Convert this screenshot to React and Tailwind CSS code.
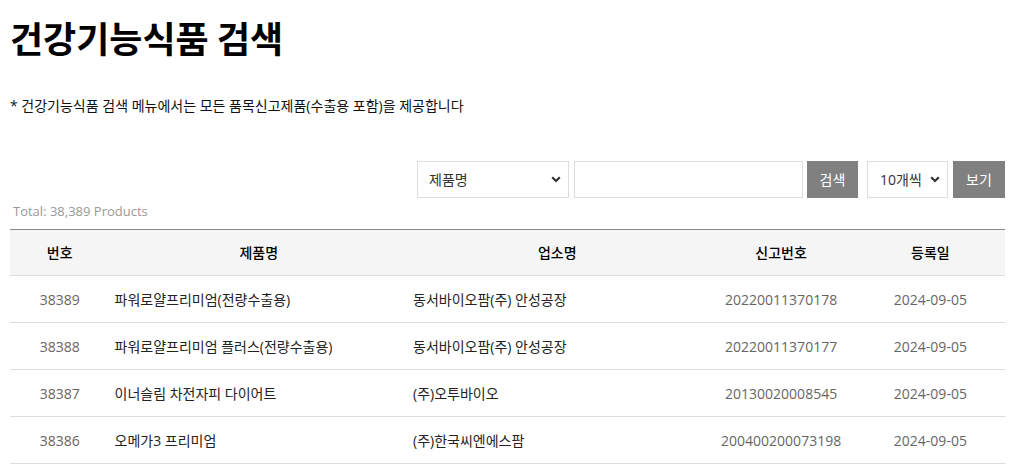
import React from "react";

const rows = [
  ["38389", "파워로얄프리미엄(전량수출용)", "동서바이오팜(주) 안성공장", "20220011370178", "2024-09-05"],
  ["38388", "파워로얄프리미엄 플러스(전량수출용)", "동서바이오팜(주) 안성공장", "20220011370177", "2024-09-05"],
  ["38387", "이너슬림 차전자피 다이어트", "(주)오투바이오", "20130020008545", "2024-09-05"],
  ["38386", "오메가3 프리미엄", "(주)한국씨엔에스팜", "200400200073198", "2024-09-05"],
];

const font = { fontFamily: '"Open Sans", "Noto Sans CJK KR", sans-serif' };

function Chevron() {
  return (
    <svg width="10" height="7" viewBox="0 0 10 7" className="pointer-events-none">
      <path d="M1.2 1.3 L5 5 L8.8 1.3" fill="none" stroke="#333" strokeWidth="2.2" />
    </svg>
  );
}

export default function App() {
  return (
    <div className="w-[1013px] h-[466px] bg-white overflow-hidden text-black" style={font}>
      <div className="ml-[10px] w-[995px]">
        <h1 className="text-[36px] font-bold leading-[44px] pt-[15px] m-0" style={{ fontFamily: '"Noto Sans CJK KR", sans-serif' }}>
          건강기능식품 검색
        </h1>
        <p className="mt-[37px] pt-[1px] text-[14px] leading-[18px] text-[#111]">* 건강기능식품 검색 메뉴에서는 모든 품목신고제품(수출용 포함)을 제공합니다</p>

        <div className="mt-[46px] flex justify-end h-[37px]">
          <div className="relative w-[152px] h-[37px] border border-[#ddd] flex items-center pl-[11px] pr-[7px] justify-between text-[14px] text-[#333]">
            <span>제품명</span>
            <Chevron />
          </div>
          <div className="ml-[5px] w-[229px] h-[37px] border border-[#ddd]" />
          <div className="ml-[4px] w-[51px] h-[37px] bg-[#808080] text-white text-[14px] flex items-center justify-center">검색</div>
          <div className="ml-[9px] w-[81px] h-[37px] border border-[#ddd] flex items-center justify-between pl-[12px] pr-[7px] text-[14px] text-[#333]">
            <span>10개씩</span>
            <Chevron />
          </div>
          <div className="ml-[5px] w-[52px] h-[37px] bg-[#808080] text-white text-[14px] flex items-center justify-center">보기</div>
        </div>

        <div className="mt-[3px] pl-[3px] text-[13px] leading-[20px] text-[#999]">Total: 38,389 Products</div>

        <table className="mt-[8px] w-[995px] border-collapse table-fixed text-[14px]">
          <colgroup>
            <col className="w-[10%]" />
            <col className="w-[30%]" />
            <col className="w-[30%]" />
            <col className="w-[15%]" />
            <col className="w-[15%]" />
          </colgroup>
          <thead>
            <tr className="bg-[#f5f5f5] border-t border-t-[#888] border-b border-b-[#ddd] h-[46px]">
              {["번호", "제품명", "업소명", "신고번호", "등록일"].map((h) => (
                <th key={h} className="font-medium text-center text-[14px] text-black">{h}</th>
              ))}
            </tr>
          </thead>
          <tbody>
            {rows.map((r) => (
              <tr key={r[0]} className="h-[47px] border-b border-[#ddd]">
                <td className="text-center text-[#666]">{r[0]}</td>
                <td className="pl-[5px] text-[#222]">{r[1]}</td>
                <td className="pl-[5px] text-[#222]">{r[2]}</td>
                <td className="text-center text-[#666]">{r[3]}</td>
                <td className="text-center text-[#666]">{r[4]}</td>
              </tr>
            ))}
          </tbody>
        </table>
      </div>
    </div>
  );
}
